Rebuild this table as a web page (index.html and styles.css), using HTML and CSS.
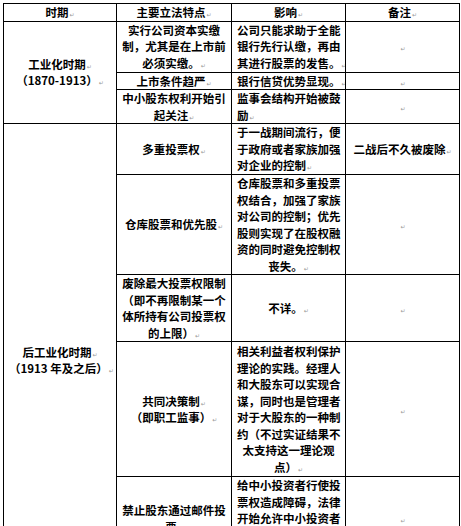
FILE: index.html
```html
<!DOCTYPE html>
<html lang="zh">
<head>
<meta charset="utf-8">
<title>立法特点</title>
<link rel="stylesheet" href="styles.css">
</head>
<body>
<table class="law">
  <colgroup>
    <col class="c1"><col class="c2"><col class="c3"><col class="c4">
  </colgroup>
  <tr class="h1">
    <th>时期<span class="pm">↵</span></th>
    <th>主要立法特点<span class="pm">↵</span></th>
    <th>影响<span class="pm">↵</span></th>
    <th>备注<span class="pm">↵</span></th>
  </tr>
  <tr class="r3l">
    <td class="period" rowspan="3">工业化时期<span class="pm">↵</span><br>（1870-1913）<span class="pm">↵</span></td>
    <td class="feat">实行公司资本实缴<br>制，尤其是在上市前<br>必须实缴。<span class="pm">↵</span></td>
    <td class="eff">公司只能求助于全能<br>银行先行认缴，再由<br>其进行股票的发售。<span class="pm">↵</span></td>
    <td class="note"><span class="pm">↵</span></td>
  </tr>
  <tr class="r1l">
    <td class="feat">上市条件趋严<span class="pm">↵</span></td>
    <td class="eff">银行信贷优势显现。<span class="pm">↵</span></td>
    <td class="note"><span class="pm">↵</span></td>
  </tr>
  <tr class="r2l">
    <td class="feat">中小股东权利开始引<br>起关注<span class="pm">↵</span></td>
    <td class="eff">监事会结构开始被鼓<br>励<span class="pm">↵</span></td>
    <td class="note"><span class="pm">↵</span></td>
  </tr>
  <tr class="r3l">
    <td class="period post" rowspan="5">后工业化时期<span class="pm">↵</span><br>（1913 年及之后）<span class="pm">↵</span></td>
    <td class="feat">多重投票权<span class="pm">↵</span></td>
    <td class="eff">于一战期间流行，便<br>于政府或者家族加强<br>对企业的控制<span class="pm">↵</span></td>
    <td class="note">二战后不久被废除<span class="pm">↵</span></td>
  </tr>
  <tr class="r6l">
    <td class="feat">仓库股票和优先股<span class="pm">↵</span></td>
    <td class="eff center">仓库股票和多重投票<br>权结合，加强了家族<br>对公司的控制；优先<br>股则实现了在股权融<br>资的同时避免控制权<br>丧失。<span class="pm">↵</span></td>
    <td class="note"><span class="pm">↵</span></td>
  </tr>
  <tr class="r4l">
    <td class="feat">废除最大投票权限制<br>（即不再限制某一个<br>体所持有公司投票权<br>的上限）<span class="pm">↵</span></td>
    <td class="eff center">不详。<span class="pm">↵</span></td>
    <td class="note"><span class="pm">↵</span></td>
  </tr>
  <tr class="r8l">
    <td class="feat">共同决策制<span class="pm">↵</span><br>（即职工监事）<span class="pm">↵</span></td>
    <td class="eff center">相关利益者权利保护<br>理论的实践。经理人<br>和大股东可以实现合<br>谋，同时也是管理者<br>对于大股东的一种制<br>约（不过实证结果不<br>太支持这一理论观<br>点）<span class="pm">↵</span></td>
    <td class="note"><span class="pm">↵</span></td>
  </tr>
  <tr class="r5l">
    <td class="feat">禁止股东通过邮件投<br>票<span class="pm">↵</span></td>
    <td class="eff">给中小投资者行使投<br>票权造成障碍，法律<br>开始允许中小投资者<br>通过邮件等方式远程<br>行使投票权。<span class="pm">↵</span></td>
    <td class="note"><span class="pm">↵</span></td>
  </tr>
</table>
</body>
</html>
```
FILE: styles.css
```css
html, body {
  margin: 0;
  padding: 0;
  background: #ffffff;
}

body {
  font-family: "Noto Sans CJK SC", "Noto Sans", sans-serif;
  color: #000000;
}

.law {
  margin: 3px 0 0 3px;
  width: 456px;
  border-collapse: collapse;
  table-layout: fixed;
  font-size: 11.5px;
  font-weight: 700;
  line-height: 16.5px;
}

.c1 { width: 113px; }
.c2 { width: 115px; }
.c3 { width: 114px; }
.c4 { width: 114px; }

.law th,
.law td {
  border: 1px solid #000000;
  padding: 0 5px;
  vertical-align: middle;
  text-align: center;
  white-space: nowrap;
  overflow: hidden;
}

.law th {
  font-weight: 700;
}

.law td.eff {
  text-align: left;
}

.law td.eff.center {
  text-align: center;
}

.law td.post {
  padding-top: 36px;
}

.h1 { height: 17px; }
.r1l { height: 17px; }
.r2l { height: 34px; }
.r3l { height: 51px; }
.r4l { height: 67px; }
.r5l { height: 84px; }
.r6l { height: 99px; }
.r8l { height: 135px; }

.pm {
  font-family: "DejaVu Sans", sans-serif;
  font-size: 6px;
  font-weight: 400;
  line-height: 0;
  color: #9a9a9a;
  margin-left: 1px;
}
```
